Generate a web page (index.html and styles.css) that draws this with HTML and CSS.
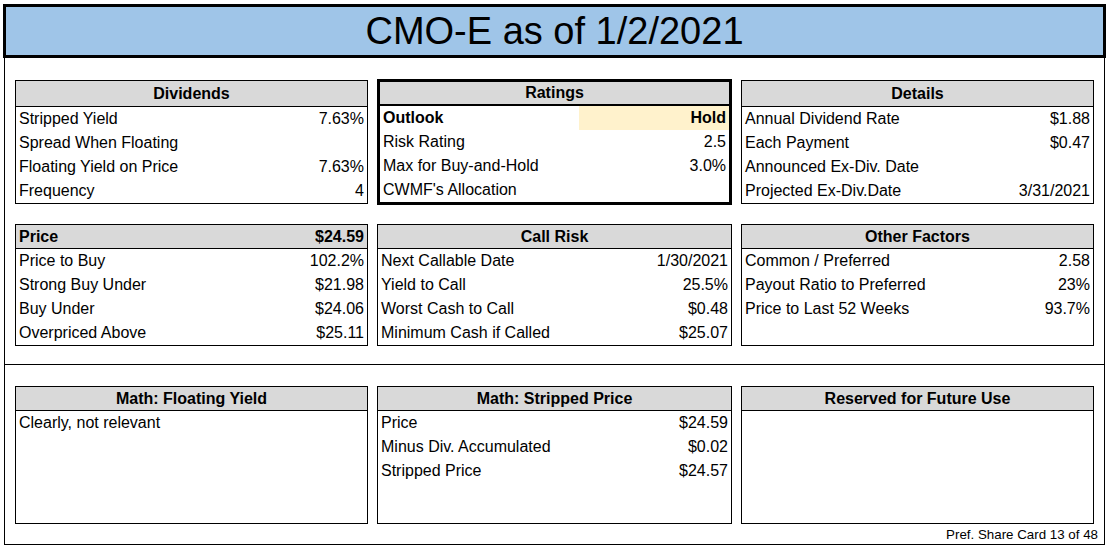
FILE: index.html
```html
<!DOCTYPE html>
<html lang="en">
<head>
<meta charset="utf-8">
<title>CMO-E as of 1/2/2021</title>
<link rel="stylesheet" href="styles.css">
</head>
<body>
<div class="page">
  <div class="title">CMO-E as of 1/2/2021</div>
  <div class="frame">
    <section class="top">
      <div class="grid row1">
        <div class="box">
          <div class="hd">Dividends</div>
          <div class="bd">
            <div class="row"><span>Stripped Yield</span><span>7.63%</span></div>
            <div class="row"><span>Spread When Floating</span><span></span></div>
            <div class="row"><span>Floating Yield on Price</span><span>7.63%</span></div>
            <div class="row"><span>Frequency</span><span>4</span></div>
          </div>
        </div>
        <div class="box thick">
          <div class="hd">Ratings</div>
          <div class="bd">
            <div class="row split"><span class="lbl">Outlook</span><span class="val">Hold</span></div>
            <div class="row"><span>Risk Rating</span><span>2.5</span></div>
            <div class="row"><span>Max for Buy-and-Hold</span><span>3.0%</span></div>
            <div class="row"><span>CWMF's Allocation</span><span></span></div>
          </div>
        </div>
        <div class="box">
          <div class="hd">Details</div>
          <div class="bd">
            <div class="row"><span>Annual Dividend Rate</span><span>$1.88</span></div>
            <div class="row"><span>Each Payment</span><span>$0.47</span></div>
            <div class="row"><span>Announced Ex-Div. Date</span><span></span></div>
            <div class="row"><span>Projected Ex-Div.Date</span><span>3/31/2021</span></div>
          </div>
        </div>
      </div>
      <div class="grid row2">
        <div class="box">
          <div class="hd split-hd"><span>Price</span><span>$24.59</span></div>
          <div class="bd">
            <div class="row"><span>Price to Buy</span><span>102.2%</span></div>
            <div class="row"><span>Strong Buy Under</span><span>$21.98</span></div>
            <div class="row"><span>Buy Under</span><span>$24.06</span></div>
            <div class="row"><span>Overpriced Above</span><span>$25.11</span></div>
          </div>
        </div>
        <div class="box">
          <div class="hd">Call Risk</div>
          <div class="bd">
            <div class="row"><span>Next Callable Date</span><span>1/30/2021</span></div>
            <div class="row"><span>Yield to Call</span><span>25.5%</span></div>
            <div class="row"><span>Worst Cash to Call</span><span>$0.48</span></div>
            <div class="row"><span>Minimum Cash if Called</span><span>$25.07</span></div>
          </div>
        </div>
        <div class="box">
          <div class="hd">Other Factors</div>
          <div class="bd">
            <div class="row"><span>Common / Preferred</span><span>2.58</span></div>
            <div class="row"><span>Payout Ratio to Preferred</span><span>23%</span></div>
            <div class="row"><span>Price to Last 52 Weeks</span><span>93.7%</span></div>
            <div class="row"><span></span><span></span></div>
          </div>
        </div>
      </div>
    </section>
    <section class="bottom">
      <div class="grid row3">
        <div class="box">
          <div class="hd">Math: Floating Yield</div>
          <div class="bd tall">
            <div class="row"><span>Clearly, not relevant</span><span></span></div>
          </div>
        </div>
        <div class="box">
          <div class="hd">Math: Stripped Price</div>
          <div class="bd tall">
            <div class="row"><span>Price</span><span>$24.59</span></div>
            <div class="row"><span>Minus Div. Accumulated</span><span>$0.02</span></div>
            <div class="row"><span>Stripped Price</span><span>$24.57</span></div>
          </div>
        </div>
        <div class="box">
          <div class="hd">Reserved for Future Use</div>
          <div class="bd tall"></div>
        </div>
      </div>
      <div class="footer">Pref. Share Card 13 of 48</div>
    </section>
  </div>
</div>
</body>
</html>
```

FILE: styles.css
```css
* {
  box-sizing: border-box;
}

html, body {
  margin: 0;
  padding: 0;
  background: #ffffff;
}

body {
  font-family: "Liberation Sans", Arial, sans-serif;
  font-size: 16px;
  color: #000000;
}

.page {
  padding: 4px 0 0 3px;
}

.title {
  width: 1103px;
  height: 54px;
  border: 3px solid #000000;
  background: #9fc5e8;
  font-size: 38px;
  line-height: 48px;
  text-align: center;
}

.frame {
  width: 1101px;
  height: 487px;
  margin-left: 1px;
  border: 1px solid #000000;
  border-top: none;
  display: flex;
  flex-direction: column;
}

.top {
  padding: 21px 0 18px 10px;
  border-bottom: 1px solid #000000;
  display: flex;
  flex-direction: column;
  gap: 19px;
}

.bottom {
  padding: 21px 0 0 10px;
  flex: 1;
  display: flex;
  flex-direction: column;
}

.grid {
  display: grid;
  grid-template-columns: 353px 355px 353px;
  column-gap: 9px;
  align-items: center;
}

.box {
  border: 1px solid #000000;
  background: #ffffff;
}

.box.thick {
  border-width: 3px;
}

.hd {
  background: #d9d9d9;
  border-bottom: 1px solid #000000;
  font-weight: bold;
  text-align: center;
  padding: 0 3px;
}

.row1 .hd {
  height: 26px;
  line-height: 25px;
}

.row1 .thick .hd {
  height: 24px;
  line-height: 22px;
  border-bottom-width: 2px;
}

.row2 .hd,
.row3 .hd {
  height: 24px;
  line-height: 23px;
}

.split-hd {
  display: flex;
  justify-content: space-between;
}

.row {
  display: flex;
  justify-content: space-between;
  height: 24px;
  line-height: 24px;
  padding: 0 3px;
  white-space: nowrap;
}

.row.split {
  padding: 0;
  font-weight: bold;
}

.row.split .lbl {
  width: 199px;
  padding-left: 3px;
}

.row.split .val {
  flex: 1;
  background: #fff2cc;
  text-align: right;
  padding-right: 3px;
}

.bd.tall {
  height: 112px;
}

.footer {
  margin-top: auto;
  height: 20px;
  line-height: 22px;
  font-size: 13.33px;
  text-align: right;
  padding-right: 6px;
}
```
